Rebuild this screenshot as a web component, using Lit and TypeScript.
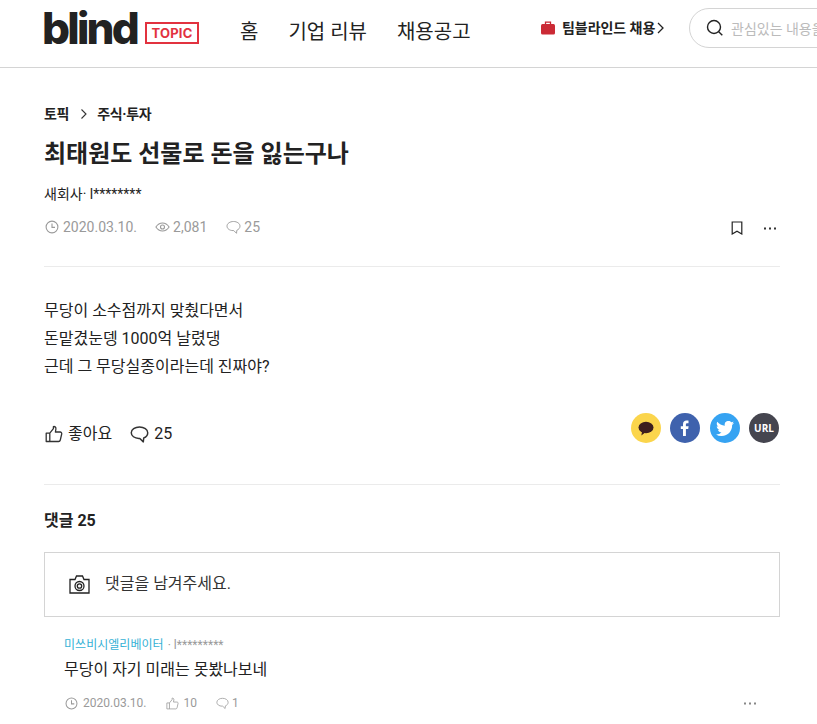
import { LitElement, html, css } from "lit";
import { customElement } from "lit/decorators.js";

const clock = (s: number) => html`<svg class="ic" width=${s} height=${s} viewBox="0 0 14 14" fill="none" stroke="#9a9a9a" stroke-width="1.1"><circle cx="7" cy="7" r="5.9"/><path d="M7 3.6V7.4H10"/></svg>`;
const eye = html`<svg class="ic" width="15" height="14" viewBox="0 0 15 14" fill="none" stroke="#9a9a9a" stroke-width="1.1"><path d="M.9 7C2.6 4.4 4.9 3 7.5 3s4.9 1.4 6.6 4c-1.7 2.6-4 4-6.6 4S2.600 9.600.9 7z"/><circle cx="7.500" cy="7" r="2"/></svg>`;
const bubble = (s: number, c: string, sw = 1.1) => html`<svg class="ic" width=${s} height=${s} viewBox="0 0 18 18" fill="none" stroke=${c} stroke-width=${sw}><path d="M9 1.800c4.300 0 7.800 2.400 7.800 5.500 0 2.400-1.700 4.200-3.800 5l-.4 3.700-3.300-3.300H8.400C4.300 12.700 1.200 10.400 1.200 7.300 1.200 4.200 4.700 1.800 9 1.800z" stroke-linejoin="round"/></svg>`;
const thumb = (s: number, c: string, sw = 1.1) => html`<svg class="ic" width=${s} height=${s} viewBox="0 0 18 18" fill="none" stroke=${c} stroke-width=${sw} stroke-linejoin="round"><path d="M1.200 8.200h3.600v8.300H1.200zM4.800 8.200 8.400 3.700V1.600c1.600-.4 2.700.8 2.500 2.400l-.5 3h4.700c1.100 0 1.900.9 1.600 2l-1.400 6c-.2.800-.8 1.500-1.700 1.500H4.800"/></svg>`;

@customElement("app-root")
export class AppRoot extends LitElement {
  static styles = css`
    :host { display: block; height: 724px; overflow: hidden; background: #fff; color: #222;
      font-family: Roboto, "Noto Sans CJK KR", sans-serif; }
    .ic { display: block; flex: none; }
    header { height: 67px; border-bottom: 1px solid #d4d4d4; display: flex; align-items: center; padding-left: 44px; overflow: hidden; position: relative; }
    .logo { font-family: Inter, sans-serif; font-weight: 800; font-size: 44px; letter-spacing: -2.8px; line-height: 45px; color: #222; width: 103px; margin: -10px 0 0 -2px; }
    .topic { box-sizing: border-box; width: 54px; height: 22px; border: 2px solid #e2323f; color: #e2323f; font: 700 13px/18px Inter, sans-serif; text-align: center; letter-spacing: .2px; margin-top: -1px; }
    nav { display: flex; gap: 30px; margin-left: 41px; font-size: 20px; line-height: 28px; margin-top: -3px; }
    .team { position: absolute; left: 541px; top: 17px; display: flex; align-items: center; font-size: 14px; font-weight: 700; line-height: 22px; letter-spacing: -.05px; }
    .team svg:first-child { margin-right: 7px; }
    .search { position: absolute; left: 689px; top: 8px; width: 200px; height: 38px; box-sizing: content-box; border: 1px solid #d4d4d4; border-radius: 20px; display: flex; align-items: center; padding-left: 16px; gap: 7px; color: #bbb; font-size: 14px; white-space: nowrap; }
    main { padding: 0 37px 0 44px; }
    .crumb { display: flex; align-items: center; margin-top: 35px; font-size: 14px; line-height: 22px; font-weight: 700; letter-spacing: -.3px; }
    .crumb svg { margin: 0 9px 0 11px; }
    h1 { margin: 11px 0 0; font-size: 24px; line-height: 36px; font-weight: 700; }
    .who { margin-top: 12px; font-size: 14px; line-height: 20px; }
    .meta { display: flex; align-items: center; margin-top: 13px; height: 20px; font-size: 14px; color: #9a9a9a; }
    .m { display: flex; align-items: center; gap: 4px; margin-right: 18px; }
    .meta > .m:first-child { margin-left: 1px; }
    .meta > .m:nth-child(2) { gap: 3px; margin-right: 19px; }
    .meta > .m:nth-child(3) { gap: 3px; }
    .meta .tools { margin-left: auto; display: flex; align-items: center; gap: 21px; margin-right: 4px; padding-top: 2px; }
    .rule { border: 0; border-top: 1px solid #ebebeb; margin: 0; }
    .meta + .rule { margin-top: 29px; }
    .body { margin: 30px 0 0; font-size: 16px; line-height: 28px; color: #222; }
    .acts { display: flex; align-items: flex-start; margin-top: 32px; height: 71px; font-size: 16px; }
    .a { display: flex; align-items: center; gap: 5px; line-height: 24px; margin-top: 9px; margin-right: 18px; }
    .a:first-child { margin-left: 1px; }
    .share { margin-left: auto; display: flex; gap: 9.33px; margin-right: 1px; }
    .c { width: 30px; height: 30px; border-radius: 50%; display: flex; align-items: center; justify-content: center; color: #fff; }
    .url { font: 700 10px/30px "Open Sans", sans-serif; }
    h2 { margin: 24px 0 0; font-size: 16px; line-height: 24px; font-weight: 700; }
    .box { box-sizing: border-box; height: 65px; margin-top: 19px; border: 1px solid #d4d4d4; display: flex; align-items: center; padding-left: 24px; gap: 15px; font-size: 16px; color: #333; }
    .box span { margin-bottom: 5px; }
    .cm { padding-left: 20px; }
    .cn { margin-top: 20px; font-size: 12px; line-height: 16px; color: #9a9a9a; letter-spacing: .03px; }
    .cn b { font-weight: 400; color: #35b1d5; margin-right: 1px; }
    .ct { margin-top: 5px; font-size: 16px; line-height: 24px; color: #222; }
    .cmeta { display: flex; align-items: center; margin-top: 12px; height: 18px; padding-left: 1px; font-size: 12px; color: #9a9a9a; }
    .cmeta .m { margin-right: 19px; }
    .cmeta .m:nth-child(1) { gap: 5px; margin-right: 20px; }
    .cmeta .m:nth-child(3) { gap: 3px; }
    .cmeta .tools { margin-left: auto; margin-right: 24px; }
  `;

  render() {
    const dots = (c: string) => html`<svg class="ic" width="12" height="3" viewBox="0 0 12 3" fill=${c}><rect x="0" y=".5" width="2" height="2"/><rect x="5" y=".5" width="2" height="2"/><rect x="10" y=".5" width="2" height="2"/></svg>`;
    return html`
      <header>
        <div class="logo">blind</div>
        <div class="topic">TOPIC</div>
        <nav><span>홈</span><span>기업 리뷰</span><span>채용공고</span></nav>
        <div class="team">
          <svg width="14" height="14" viewBox="0 0 14 14"><path d="M4.500 3V1.200h5V3" fill="none" stroke="#c8252f" stroke-width="1.300"/><rect y="3" width="14" height="10.500" rx="1.500" fill="#cb2a35"/></svg>
          <span>팀블라인드 채용</span>
          <svg width="9" height="12" viewBox="0 0 9 12" fill="none" stroke="#222" stroke-width="1.300" style="margin-left:1px"><path d="M2 1l5 5-5 5"/></svg>
        </div>
        <div class="search">
          <svg width="18" height="18" viewBox="0 0 18 18" fill="none" stroke="#222" stroke-width="1.400"><circle cx="8" cy="8" r="6.500"/><path d="M12.700 12.700l3.600 3.600"/></svg>
          <span>관심있는 내용을 검색해보세요</span>
        </div>
      </header>
      <main>
        <div class="crumb"><span>토픽</span><svg width="8" height="12" viewBox="0 0 8 12" fill="none" stroke="#333" stroke-width="1.100"><path d="M1.500 1.500 6 6l-4.500 4.500"/></svg><span>주식·투자</span></div>
        <h1>최태원도 선물로 돈을 잃는구나</h1>
        <div class="who">새회사· l********</div>
        <div class="meta">
          <span class="m">${clock(14)}2020.03.10.</span>
          <span class="m">${eye}2,081</span>
          <span class="m">${bubble(15, "#9a9a9a")}25</span>
          <span class="tools">
            <svg class="ic" width="12" height="14" viewBox="0 0 12 14" fill="none" stroke="#222" stroke-width="1.200"><path d="M1.200 1h9.600v12L6 10.200 1.200 13z"/></svg>
            ${dots("#333")}
          </span>
        </div>
        <hr class="rule" />
        <p class="body">무당이 소수점까지 맞췄다면서<br />돈맡겼눈뎅 1000억 날렸댕<br />근데 그 무당실종이라는데 진짜야?</p>
        <div class="acts">
          <span class="a">${thumb(18, "#333", 1.3)}좋아요</span>
          <span class="a">${bubble(19, "#333", 1.4)}25</span>
          <span class="share">
            <span class="c" style="background:#fbd54c"><svg width="16" height="15" viewBox="0 0 16 15" fill="#3d1e1e"><ellipse cx="8" cy="6.500" rx="7.500" ry="5.800"/><path d="M4 10.500l-.6 4 3.800-3z"/></svg></span>
            <span class="c" style="background:#3f62ad"><svg width="10" height="16" viewBox="0 0 10 16" fill="#fff"><path d="M3 16V9H.8V6.200H3V4.300C3 1.800 4.400.6 6.500.6c1 0 1.800.1 2 .1v2.500H7.200C6.100 3.200 5.900 3.800 5.900 4.500v1.700h2.700L8.200 9H5.900v7z"/></svg></span>
            <span class="c" style="background:#36a3f2"><svg width="18" height="15" viewBox="0 0 24 20" fill="#fff"><path d="M24 2.400c-.9.400-1.800.7-2.800.8 1-.6 1.800-1.600 2.200-2.700-1 .6-2 1-3.100 1.200A4.900 4.900 0 0 0 11.800 6.200C7.700 6 4.100 4 1.700.9.400 3.100 1 6 3.200 7.500c-.8 0-1.600-.2-2.200-.6 0 2.400 1.700 4.400 3.900 4.900-.7.200-1.500.2-2.200.1.600 2 2.400 3.400 4.600 3.400A9.900 9.900 0 0 1 0 17.900 14 14 0 0 0 7.500 20c9.100 0 14.300-7.700 14-14.600 1-.7 1.800-1.600 2.500-3z"/></svg></span>
            <span class="c url" style="background:#45454f">URL</span>
          </span>
        </div>
        <hr class="rule" />
        <h2>댓글 25</h2>
        <div class="box">
          <svg class="ic" width="21" height="19" viewBox="0 0 21 19" fill="none" stroke="#222" stroke-width="1.300"><path d="M1 4.500h5l1.500-3.500h6L15 4.500h5V18H1z"/><circle cx="10.500" cy="11" r="4.500"/><circle cx="10.500" cy="11" r="2.200"/></svg>
          <span>댓글을 남겨주세요.</span>
        </div>
        <div class="cm">
          <div class="cn"><b>미쓰비시엘리베이터</b> · l*********</div>
          <div class="ct">무당이 자기 미래는 못봤나보네</div>
          <div class="cmeta">
            <span class="m">${clock(13)}2020.03.10.</span>
            <span class="m">${thumb(13, "#9a9a9a")}10</span>
            <span class="m">${bubble(13, "#9a9a9a")}1</span>
            <span class="tools">${dots("#888")}</span>
          </div>
        </div>
      </main>
    `;
  }
}
